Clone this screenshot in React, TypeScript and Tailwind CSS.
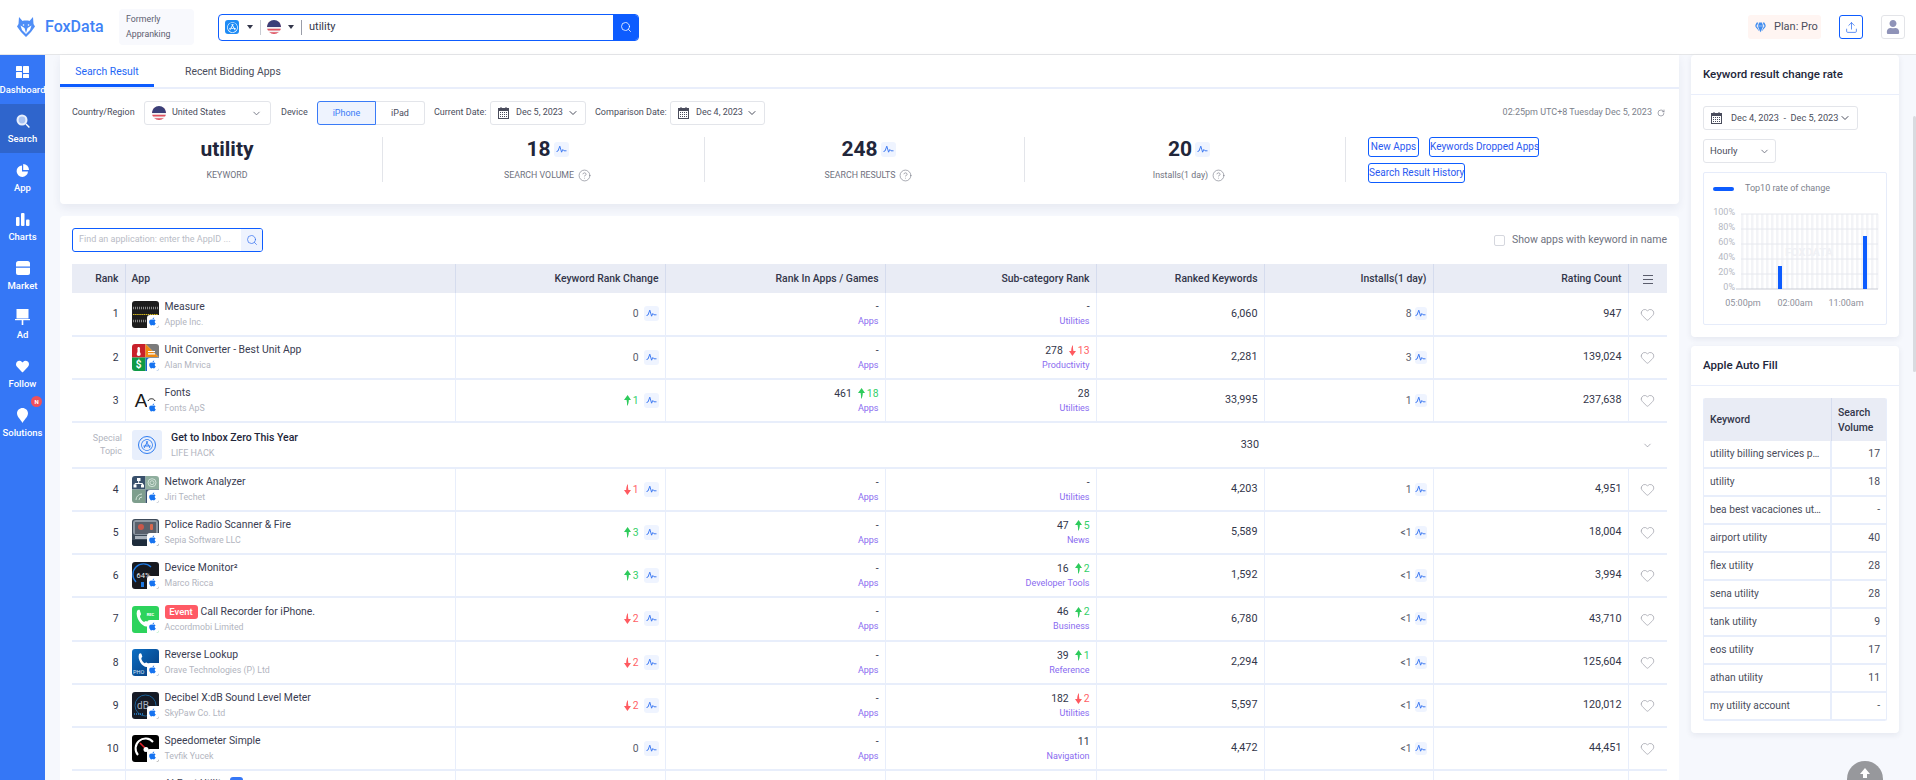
import * as React from "react";
import { ChevronDown, CircleHelp, Heart, RotateCw, Search, Upload } from "lucide-react";
import { FaApple, FaAppStore, FaGem, FaHeart, FaUser } from "react-icons/fa";

type Delta = { dir: "up" | "down"; n: number };

interface Row {
  rank: number;
  name: string;
  dev: string;
  icon: string;
  event?: boolean;
  change: number | Delta;
  apps?: { val: number; delta: Delta };
  sub: { val?: number; delta?: Delta; label: string };
  ranked: string;
  installs: string;
  rating: string;
}

const rows: Row[] = [
  { rank: 1, name: "Measure", dev: "Apple Inc.", icon: "measure", change: 0, sub: { label: "Utilities" }, ranked: "6,060", installs: "8", rating: "947" },
  { rank: 2, name: "Unit Converter - Best Unit App", dev: "Alan Mrvica", icon: "unit", change: 0, sub: { val: 278, delta: { dir: "down", n: 13 }, label: "Productivity" }, ranked: "2,281", installs: "3", rating: "139,024" },
  { rank: 3, name: "Fonts", dev: "Fonts ApS", icon: "fonts", change: { dir: "up", n: 1 }, apps: { val: 461, delta: { dir: "up", n: 18 } }, sub: { val: 28, label: "Utilities" }, ranked: "33,995", installs: "1", rating: "237,638" },
  { rank: 4, name: "Network Analyzer", dev: "Jiri Techet", icon: "network", change: { dir: "down", n: 1 }, sub: { label: "Utilities" }, ranked: "4,203", installs: "1", rating: "4,951" },
  { rank: 5, name: "Police Radio Scanner & Fire", dev: "Sepia Software LLC", icon: "police", change: { dir: "up", n: 3 }, sub: { val: 47, delta: { dir: "up", n: 5 }, label: "News" }, ranked: "5,589", installs: "<1", rating: "18,004" },
  { rank: 6, name: "Device Monitor²", dev: "Marco Ricca", icon: "device", change: { dir: "up", n: 3 }, sub: { val: 16, delta: { dir: "up", n: 2 }, label: "Developer Tools" }, ranked: "1,592", installs: "<1", rating: "3,994" },
  { rank: 7, name: "Call Recorder for iPhone.", dev: "Accordmobi Limited", icon: "call", event: true, change: { dir: "down", n: 2 }, sub: { val: 46, delta: { dir: "up", n: 2 }, label: "Business" }, ranked: "6,780", installs: "<1", rating: "43,710" },
  { rank: 8, name: "Reverse Lookup", dev: "Orave Technologies (P) Ltd", icon: "reverse", change: { dir: "down", n: 2 }, sub: { val: 39, delta: { dir: "up", n: 1 }, label: "Reference" }, ranked: "2,294", installs: "<1", rating: "125,604" },
  { rank: 9, name: "Decibel X:dB Sound Level Meter", dev: "SkyPaw Co. Ltd", icon: "decibel", change: { dir: "down", n: 2 }, sub: { val: 182, delta: { dir: "down", n: 2 }, label: "Utilities" }, ranked: "5,597", installs: "<1", rating: "120,012" },
  { rank: 10, name: "Speedometer Simple", dev: "Tevfik Yucek", icon: "speed", change: 0, sub: { val: 11, label: "Navigation" }, ranked: "4,472", installs: "<1", rating: "44,451" },
];

const autoFill: [string, string][] = [
  ["utility billing services provider", "17"],
  ["utility", "18"],
  ["bea best vacaciones utility", "-"],
  ["airport utility", "40"],
  ["flex utility", "28"],
  ["sena utility", "28"],
  ["tank utility", "9"],
  ["eos utility", "17"],
  ["athan utility", "11"],
  ["my utility account", "-"],
];

function Flag({ size = 14 }: { size?: number }) {
  const id = React.useId();
  return (
    <svg width={size} height={size} viewBox="0 0 16 16" className="shrink-0">
      <clipPath id={id}>
        <circle cx="8" cy="8" r="8" />
      </clipPath>
      <g clipPath={`url(#${id})`}>
        <rect width="16" height="16" fill="#f3f3f5" />
        <rect y="2" width="16" height="2" fill="#e0525f" />
        <rect y="6" width="16" height="2" fill="#e0525f" />
        <rect y="10" width="16" height="2" fill="#e0525f" />
        <rect y="14" width="16" height="2" fill="#e0525f" />
        <rect width="16" height="8" fill="#3b3f78" />
      </g>
    </svg>
  );
}

function CalendarIcon() {
  return (
    <svg width="11" height="12" viewBox="0 0 11 12" className="shrink-0">
      <rect x="0.5" y="1.5" width="10" height="10" fill="none" stroke="#4a4d5c" />
      <rect x="0.5" y="1.5" width="10" height="2.5" fill="#4a4d5c" />
      <rect x="2.5" y="0" width="1" height="2.5" fill="#4a4d5c" />
      <rect x="7.5" y="0" width="1" height="2.5" fill="#4a4d5c" />
      <path d="M2 5.5h7M2 7.5h7M2 9.5h7" stroke="#4a4d5c" strokeDasharray="1 1" />
    </svg>
  );
}

function Trend({ w = 15, h = 15 }: { w?: number; h?: number }) {
  return (
    <span className="inline-flex items-center justify-center rounded-[3px] bg-[#eff4ff] shrink-0" style={{ width: w, height: h }}>
      <svg width="11" height="9" viewBox="0 0 11 9" fill="none">
        <path d="M0.5 6.5 2 6 3.8 1.2 5.6 7.2 6.8 4.5 8 5.8h2.5" stroke="#2f6ff0" strokeWidth="0.9" />
      </svg>
    </span>
  );
}

function Arrow({ dir }: { dir: "up" | "down" }) {
  return (
    <svg width="7" height="11" viewBox="0 0 7 11" className="inline-block shrink-0">
      {dir === "up" ? (
        <path d="M3.6 0 7 5H4.8C4.8 7 4.4 9.5 3 11 3.2 9 3 7 2.6 5H0Z" fill="#2ecb5c" />
      ) : (
        <path d="M3.4 11 0 6H2.2C2.2 4 2.6 1.5 4 0 3.8 2 4 4 4.4 6H7Z" fill="#ff5a60" />
      )}
    </svg>
  );
}

function DeltaView({ delta }: { delta: Delta }) {
  return (
    <span className={`inline-flex items-center gap-[2px] ${delta.dir === "up" ? "text-[#35cf6a]" : "text-[#ff5f66]"}`}>
      <Arrow dir={delta.dir} />
      {delta.n}
    </span>
  );
}

function AppIcon({ kind }: { kind: string }) {
  let art: React.ReactNode = null;
  if (kind === "measure") {
    art = (
      <>
        <rect width="27" height="27" fill="#1c1c1c" />
        <path d="M1 7h25" stroke="#8a8a8a" strokeWidth="2.5" strokeDasharray="1 1" />
        <path d="M1 13.5h25" stroke="#d6b91f" strokeWidth="1" strokeDasharray="1.5 0.6" />
        <path d="M1 20h16" stroke="#8a8a8a" strokeWidth="2.5" strokeDasharray="1 1" />
      </>
    );
  } else if (kind === "unit") {
    art = (
      <>
        <rect width="13.5" height="13.5" fill="#c8202a" />
        <path d="M13.5 0H27V13.5Z" fill="#7b7b7b" />
        <path d="M13.5 0 27 13.5H13.5Z" fill="#ef8a10" />
        <rect y="13.5" width="13.5" height="13.5" fill="#0f9a45" />
        <rect x="13.5" y="13.5" width="13.5" height="13.5" fill="#1766c8" />
        <rect x="5.5" y="3" width="2.4" height="7" rx="1.2" fill="#fff" />
        <circle cx="6.7" cy="10" r="2" fill="#fff" />
        <path d="M16 7.5h7M16 9.8h7" stroke="#fff" strokeWidth="1.2" />
        <text x="6.7" y="24" fontSize="10" fontWeight="700" fill="#fff" textAnchor="middle" fontFamily="Roboto, sans-serif">$</text>
      </>
    );
  } else if (kind === "fonts") {
    art = (
      <>
        <rect width="27" height="27" fill="#fff" />
        <text x="9" y="20" fontSize="19" fill="#1a1a1a" textAnchor="middle" fontFamily="'Liberation Sans', sans-serif">A</text>
        <path d="M16 14c1-3 6-3 7 0" fill="none" stroke="#1a1a1a" strokeWidth="1" />
      </>
    );
  } else if (kind === "network") {
    art = (
      <>
        <rect width="13.5" height="13.5" fill="#39506b" />
        <rect x="13.5" width="13.5" height="13.5" fill="#8fae9e" />
        <rect y="13.5" width="13.5" height="13.5" fill="#7e9e8d" />
        <rect x="13.5" y="13.5" width="13.5" height="13.5" fill="#39506b" />
        <path d="M6.7 3v4M3 10V7.5h7.5V10" fill="none" stroke="#fff" />
        <rect x="5" y="2" width="3.5" height="3" fill="#fff" />
        <rect x="1.5" y="8.5" width="3" height="3" fill="#fff" />
        <rect x="9" y="8.5" width="3" height="3" fill="#fff" />
        <circle cx="20" cy="6.7" r="4" fill="none" stroke="#cfe0d6" />
        <circle cx="20" cy="6.7" r="2" fill="none" stroke="#cfe0d6" />
        <path d="M4 24a6 6 0 0 1 6-6M7 24a3 3 0 0 1 3-3" fill="none" stroke="#cfe0d6" />
      </>
    );
  } else if (kind === "police") {
    art = (
      <>
        <rect width="27" height="27" fill="#3d4a58" />
        <rect x="1" y="1" width="25" height="15" rx="3" fill="#8e98a3" />
        <rect x="3" y="3" width="21" height="12" fill="#59606b" />
        <circle cx="9" cy="8" r="3" fill="#c9574a" />
        <rect x="18" y="5" width="3" height="6" rx="1" fill="#d8694f" />
        <rect x="3" y="17" width="21" height="3" fill="#aab2bb" />
        <rect y="21" width="27" height="6" fill="#1e2c3b" />
      </>
    );
  } else if (kind === "device") {
    art = (
      <>
        <rect width="27" height="27" fill="#181a20" />
        <path d="M4 20A10.5 10.5 0 0 1 19 5" fill="none" stroke="#1e78e0" strokeWidth="1.4" />
        <text x="11.5" y="16" fontSize="7.5" fill="#f0f0f0" textAnchor="middle" fontFamily="Roboto, sans-serif">64%</text>
        <rect x="9" y="20" width="3" height="5" fill="#1e78e0" />
      </>
    );
  } else if (kind === "call") {
    art = (
      <>
        <rect width="27" height="27" fill="#2dd35c" />
        <path d="M5 5c2-2 3-1 3 0l1 3c0 1-1 1.600-1 2 0 2 2 5 4 6 .6 0 1-1 2-1l3 1.500c1 1 0 3-2 4C10 21 3 12 5 5Z" fill="#fff" />
        <text x="18.500" y="10" fontSize="4" fontWeight="700" fill="#fff" textAnchor="middle" fontFamily="Roboto, sans-serif">REC</text>
      </>
    );
  } else if (kind === "reverse") {
    art = (
      <>
        <defs>
          <linearGradient id="revGrad" x1="0" y1="0" x2="1" y2="1">
            <stop offset="0" stopColor="#0b6fc4" />
            <stop offset="1" stopColor="#083a7a" />
          </linearGradient>
        </defs>
        <rect width="27" height="27" fill="url(#revGrad)" />
        <path d="M7 5c1-1 2-1 2.500 0l.8 2.500c0 1-1 1-1 1.700 0 2 2 4.300 3.500 5 .6 0 1-.8 1.700-.7l2.500 1.500c.8.8 0 2.500-1.500 3C11 19 5 11 7 5Z" fill="#fff" />
        <text x="1" y="25" fontSize="5.500" fill="#dbe8f5" fontFamily="Roboto, sans-serif">PHO</text>
      </>
    );
  } else if (kind === "decibel") {
    art = (
      <>
        <rect width="27" height="27" fill="#161b26" />
        <circle cx="13.500" cy="13.500" r="10.500" fill="none" stroke="#1a5f94" strokeWidth="1" />
        <text x="11" y="17" fontSize="10" fill="#a9b4c0" textAnchor="middle" fontFamily="Roboto, sans-serif">dB</text>
        <path d="M2 22h9" stroke="#2a86d6" strokeWidth="1.500" strokeDasharray="1 1" />
      </>
    );
  } else if (kind === "speed") {
    art = (
      <>
        <rect width="27" height="27" fill="#000" />
        <path d="M6 20A9.500 9.500 0 0 1 21 7" fill="none" stroke="#fff" strokeWidth="2" />
        <path d="M8 8l6 6" stroke="#e6242b" strokeWidth="1.600" />
        <circle cx="14" cy="14.500" r="2.500" fill="#fff" />
      </>
    );
  }
  return (
    <div className="relative w-[27px] h-[27px] shrink-0 rounded-[3px] overflow-hidden">
      <svg width="27" height="27" viewBox="0 0 27 27" className="block">{art}</svg>
      <span className="absolute right-0 bottom-0 w-[12px] h-[13px] bg-white rounded-tl-[3px] flex items-center justify-center">
        <FaApple className="text-[#1673f0] text-[9px]" />
      </span>
    </div>
  );
}

const side: { label: string; icon: React.ReactNode; active?: boolean; badge?: boolean }[] = [
  {
    label: "Dashboard",
    icon: (
      <svg width="13" height="12" viewBox="0 0 13 12" fill="#fff">
        <rect width="6" height="5" rx="0.600" />
        <rect x="7" width="6" height="7" rx="0.600" />
        <rect y="6" width="6" height="6" rx="0.600" />
        <rect x="7" y="8" width="6" height="4" rx="0.600" />
      </svg>
    ),
  },
  {
    label: "Search",
    active: true,
    icon: (
      <svg width="14" height="14" viewBox="0 0 14 14">
        <circle cx="6" cy="6" r="5.500" fill="#e8effc" />
        <circle cx="6" cy="6" r="3.400" fill="#a9c3f2" />
        <path d="M10 10l3.400 3.400" stroke="#fff" strokeWidth="1.400" />
      </svg>
    ),
  },
  {
    label: "App",
    icon: (
      <svg width="13" height="13" viewBox="0 0 13 13" fill="#fff">
        <path d="M6 1.500A5.700 5.700 0 1 0 12 7.500H6Z" />
        <path d="M7.200 0v6h5.800A6 6 0 0 0 7.200 0Z" />
      </svg>
    ),
  },
  {
    label: "Charts",
    icon: (
      <svg width="14" height="13" viewBox="0 0 14 13" fill="#fff">
        <rect y="4" width="3.500" height="9" rx="1" />
        <rect x="5" width="3.500" height="13" rx="1" />
        <rect x="10" y="6.500" width="3.500" height="6.500" rx="1" />
      </svg>
    ),
  },
  {
    label: "Market",
    icon: (
      <svg width="14" height="14" viewBox="0 0 14 14" fill="#fff">
        <path d="M2.500 0h9A2.500 2.500 0 0 1 14 2.500V5.500H0V2.500A2.500 2.500 0 0 1 2.500 0Z" />
        <path d="M0 6.800h14V12a2 2 0 0 1-2 2H2a2 2 0 0 1-2-2Z" />
      </svg>
    ),
  },
  {
    label: "Ad",
    icon: (
      <svg width="15" height="16" viewBox="0 0 15 16" fill="#fff">
        <rect x="1.500" width="12" height="9.500" />
        <rect y="10" width="15" height="1.200" />
        <rect x="6.700" y="11" width="1.600" height="5" />
      </svg>
    ),
  },
  { label: "Follow", icon: <FaHeart className="text-white text-[13px]" /> },
  {
    label: "Solutions",
    badge: true,
    icon: (
      <svg width="11" height="15" viewBox="0 0 11 15" fill="#fff">
        <path d="M5.500 0C8.500 0 11 2.300 11 5.300 11 9 7 12 5.500 15 4 12 0 9 0 5.300 0 2.300 2.500 0 5.500 0Z" />
      </svg>
    ),
  },
];

function Sidebar() {
  return (
    <nav className="w-[45px] shrink-0 bg-[#3577f6] flex flex-col">
      {side.map((s) => (
        <div
          key={s.label}
          className={`relative h-[49px] flex flex-col items-center text-white text-[9.5px] font-medium ${s.active ? "bg-[#2f65cc]" : ""}`}
        >
          <div className="h-[16px] mt-[9px] flex items-center justify-center">{s.icon}</div>
          <span className="mt-[3px] leading-[13px] whitespace-nowrap">{s.label}</span>
          {s.badge && (
            <span className="absolute left-[31px] top-[-2px] w-[11px] h-[11px] rounded-full bg-[#f0505a] text-white text-[6px] font-bold leading-[11px] text-center">N</span>
          )}
        </div>
      ))}
    </nav>
  );
}

function Header() {
  return (
    <header className="h-[55px] shrink-0 bg-white border-b border-[#e5e6e8] flex items-center pl-[17px] pr-[11px]">
      <svg width="18" height="20" viewBox="0 0 18 20" fill="none" className="shrink-0">
        <path d="M2 0 5.500 4C7 3.400 11 3.400 12.500 4L16 0l.5 7L18 9.500 14 15l-5 5-5-5L0 9.500 1.500 7Z" fill="#4f8ef7" />
        <path d="M3.500 8.500 7.500 11 9 16l1.500-5 4-2.500L13 13l-4 4-4-4Z" fill="#fff" />
        <circle cx="6.500" cy="8" r="0.800" fill="#fff" />
        <circle cx="11.500" cy="8" r="0.800" fill="#fff" />
      </svg>
      <span className="ml-[10px] w-[74px] shrink-0 text-[16px] font-medium text-[#3f83f6]">FoxData</span>
      <div className="w-[75px] h-[36px] shrink-0 rounded-[4px] bg-[#f8f9fd] pl-[7px] text-[8.800px] text-[#5d6070] leading-[15px] pt-[3px]">
        Formerly<br />Appranking
      </div>
      <div className="ml-[24px] w-[421px] h-[27px] border border-[#0d5cff] rounded-[4px] flex items-center overflow-hidden">
        <span className="ml-[6px] w-[14px] h-[14px] rounded-[3px] bg-[#1e8bf5] flex items-center justify-center">
          <FaAppStore className="text-white text-[11px]" />
        </span>
        <span className="ml-[8px] border-x-[3px] border-x-transparent border-t-[4px] border-t-[#33364a]" />
        <span className="ml-[7px] h-[15px] w-px bg-[#c9ccd3]" />
        <span className="ml-[6px]"><Flag /></span>
        <span className="ml-[7px] border-x-[3px] border-x-transparent border-t-[4px] border-t-[#33364a]" />
        <span className="ml-[7px] h-[15px] w-px bg-[#9a9da8]" />
        <span className="ml-[7px] text-[11px] text-[#33364a] flex-1">utility</span>
        <span className="w-[25px] h-full bg-[#0d5cff] flex items-center justify-center">
          <Search className="w-[12px] h-[12px] text-white" strokeWidth={1.6} />
        </span>
      </div>
      <div className="ml-auto w-[73px] h-[24px] rounded-[3px] bg-[#fff5f2] flex items-center pl-[7px] text-[11px] text-[#4a4d5c]">
        <FaGem className="text-[#3f8cf0] text-[11px]" />
        <span className="ml-[8px]">Plan: Pro</span>
      </div>
      <div className="ml-[18px] w-[24px] h-[24px] rounded-[3px] border border-[#0d5cff] flex items-center justify-center">
        <Upload className="w-[13px] h-[13px] text-[#2f6ff0]" strokeWidth={1.4} />
      </div>
      <div className="ml-[18px] w-[24px] h-[24px] rounded-[3px] border border-[#e3e4e8] flex items-center justify-center">
        <FaUser className="text-[#8f93b8] text-[14px]" />
      </div>
    </header>
  );
}

function Select({ className, children }: { className: string; children: React.ReactNode }) {
  return (
    <div className={`h-[24px] border border-[#e3e5ea] rounded-[3px] flex items-center text-[9px] text-[#4a4d5c] shrink-0 ${className}`}>
      {children}
    </div>
  );
}

function Stat({ value, label, trend, help, w }: { value: string; label: string; trend?: boolean; help?: boolean; w: string }) {
  return (
    <div className={`h-[45px] shrink-0 border-r border-[#e3e5ea] flex flex-col items-center ${w}`}>
      <div className="h-[24px] flex items-center gap-[3px] text-[21px] font-bold text-[#22263a] leading-none">
        {value}
        {trend && <Trend />}
      </div>
      <div className="mt-[8px] flex items-center gap-[4px] text-[8.800px] text-[#6f7280] leading-[13px]">
        {label}
        {help && <CircleHelp className="w-[13px] h-[13px] text-[#6f7280]" strokeWidth={1.1} />}
      </div>
    </div>
  );
}

function TopPanel() {
  return (
    <section className="h-[149px] bg-white rounded-b-[4px] shadow-[0_4px_10px_rgba(30,40,80,0.07)]">
      <div className="h-[34px] border-b-2 border-[#e9eefb] flex items-end text-[10.400px]">
        <div className="w-[94px] h-[34px] border-b-[3px] border-[#0d5cff] text-[#1e66f5] text-center leading-[38px]">Search Result</div>
        <div className="ml-[31px] h-[34px] text-[#4a4d5c] leading-[38px]">Recent Bidding Apps</div>
      </div>
      <div className="mt-[12px] pl-[12px] pr-[14px] flex items-center text-[9px] text-[#4a4d5c]">
        <span className="w-[72px] shrink-0">Country/Region</span>
        <Select className="w-[127px] pl-[7px] pr-[8px]">
          <Flag />
          <span className="ml-[6px] flex-1">United States</span>
          <ChevronDown className="w-[11px] h-[11px] text-[#6f7280]" />
        </Select>
        <span className="ml-[10px] w-[36px] shrink-0">Device</span>
        <div className="h-[24px] w-[108px] flex shrink-0 text-center leading-[22px]">
          <div className="w-[59px] border border-[#3a7bf7] rounded-l-[3px] bg-[#eef3fe] text-[#3a7bf7]">iPhone</div>
          <div className="w-[49px] border border-l-0 border-[#e3e5ea] rounded-r-[3px]">iPad</div>
        </div>
        <span className="ml-[9px] w-[56px] shrink-0 whitespace-nowrap">Current Date:</span>
        <Select className="w-[96px] pl-[7px] pr-[6px]">
          <CalendarIcon />
          <span className="ml-[7px] flex-1 whitespace-nowrap">Dec 5, 2023</span>
          <ChevronDown className="w-[12px] h-[12px]" />
        </Select>
        <span className="ml-[9px] w-[75px] shrink-0 whitespace-nowrap">Comparison Date:</span>
        <Select className="w-[95px] pl-[7px] pr-[6px]">
          <CalendarIcon />
          <span className="ml-[7px] flex-1 whitespace-nowrap">Dec 4, 2023</span>
          <ChevronDown className="w-[12px] h-[12px]" />
        </Select>
        <span className="ml-auto flex items-center gap-[5px] text-[9px] text-[#7c7f8c] whitespace-nowrap">
          02:25pm UTC+8 Tuesday Dec 5, 2023
          <RotateCw className="w-[8px] h-[8px]" />
        </span>
      </div>
      <div className="mt-[12px] pl-[12px] flex">
        <Stat w="w-[311px]" value="utility" label="KEYWORD" />
        <Stat w="w-[322px] pl-[8px]" value="18" label="SEARCH VOLUME" trend help />
        <Stat w="w-[320px] pl-[8px]" value="248" label="SEARCH RESULTS" trend help />
        <Stat w="w-[321px] pl-[8px]" value="20" label="Installs(1 day)" trend help />
        <div className="ml-[22px] w-[175px] flex flex-wrap gap-x-[10px] gap-y-[6px] text-[10px] text-[#2b59f0]">
          <span className="h-[20px] w-[51px] border border-[#0d5cff] rounded-[3px] leading-[17px] text-center whitespace-nowrap">New Apps</span>
          <span className="h-[20px] w-[110px] border border-[#0d5cff] rounded-[3px] leading-[17px] text-center whitespace-nowrap">Keywords Dropped Apps</span>
          <span className="h-[20px] w-[97px] border border-[#0d5cff] rounded-[3px] leading-[17px] text-center whitespace-nowrap">Search Result History</span>
        </div>
      </div>
    </section>
  );
}

const cell = "border-b-2 border-r border-[#e8eefb] text-right pr-[6px] align-middle";
const headCell = "border-r border-[#d5dcee] text-right pr-[6px] font-medium text-[#33364a] text-[10.400px] align-middle";

function RankCell({ val, delta, label }: { val?: number; delta?: Delta; label: string }) {
  return (
    <td className={cell}>
      <div className="flex flex-col items-end leading-[14px]">
        <div className="flex items-center gap-[6px] h-[14px] text-[10.400px] text-[#33364a]">
          {val === undefined ? "-" : val}
          {delta && <DeltaView delta={delta} />}
        </div>
        <div className="text-[9px] text-[#8a6cf0]">{label}</div>
      </div>
    </td>
  );
}

function AppRow({ r }: { r: Row }) {
  return (
    <tr className={r.event ? "h-[44px]" : "h-[43px]"}>
      <td className={`${cell} text-[10.400px] text-[#33364a]`}>{r.rank}</td>
      <td className={`${cell} !text-left pl-[6px]`}>
        <div className="flex items-center gap-[6px]">
          <AppIcon kind={r.icon} />
          <div className="min-w-0 leading-[14px]">
            <div className="flex items-center text-[10.400px] text-[#3a3d52] whitespace-nowrap">
              {r.event && <span className="h-[14px] w-[33px] mr-[3px] rounded-[3px] bg-[#ff5a65] text-white text-[9.500px] font-medium leading-[14px] text-center">Event</span>}
              {r.name}
            </div>
            <div className="mt-[1px] text-[8.800px] text-[#b2b5c0] whitespace-nowrap">{r.dev}</div>
          </div>
        </div>
      </td>
      <td className={cell}>
        <div className="flex items-center justify-end gap-[5px] text-[10.400px] text-[#5a5d6c]">
          {typeof r.change === "number" ? r.change : <DeltaView delta={r.change} />}
          <Trend />
        </div>
      </td>
      {r.apps ? <RankCell val={r.apps.val} delta={r.apps.delta} label="Apps" /> : <RankCell label="Apps" />}
      <RankCell val={r.sub.val} delta={r.sub.delta} label={r.sub.label} />
      <td className={`${cell} text-[10.800px] text-[#33364a]`}>{r.ranked}</td>
      <td className={cell}>
        <div className="flex items-center justify-end gap-[3px] text-[10.400px] text-[#5a5d6c]">
          {r.installs}
          <Trend w={12} h={13} />
        </div>
      </td>
      <td className={`${cell} text-[10.800px] text-[#33364a]`}>{r.rating}</td>
      <td className="border-b-2 border-[#e8eefb] align-middle">
        <Heart className="block mx-auto w-[15px] h-[15px] text-[#8e919c]" strokeWidth={1} />
      </td>
    </tr>
  );
}

function ResultTable() {
  return (
    <table className="w-[1595px] table-fixed border-collapse">
      <colgroup>
        <col className="w-[53px]" />
        <col className="w-[330px]" />
        <col className="w-[210px]" />
        <col className="w-[220px]" />
        <col className="w-[211px]" />
        <col className="w-[168px]" />
        <col className="w-[169px]" />
        <col className="w-[195px]" />
        <col className="w-[39px]" />
      </colgroup>
      <thead>
        <tr className="h-[29px] bg-[#e9ecf5]">
          <th className={headCell}>Rank</th>
          <th className={`${headCell} !text-left pl-[6px]`}>App</th>
          <th className={headCell}>Keyword Rank Change</th>
          <th className={headCell}>Rank In Apps / Games</th>
          <th className={headCell}>Sub-category Rank</th>
          <th className={headCell}>Ranked Keywords</th>
          <th className={headCell}>Installs(1 day)</th>
          <th className={headCell}>Rating Count</th>
          <th className="text-center align-middle">
            <span className="inline-flex flex-col gap-[2.500px] align-middle">
              <span className="w-[10px] h-[1.500px] bg-[#5a5d6c]" />
              <span className="w-[10px] h-[1.500px] bg-[#5a5d6c]" />
              <span className="w-[10px] h-[1.500px] bg-[#5a5d6c]" />
            </span>
          </th>
        </tr>
      </thead>
      <tbody>
        {rows.slice(0, 3).map((r) => <AppRow key={r.rank} r={r} />)}
        <tr className="h-[46px]">
          <td className="border-b-2 border-[#e8eefb] text-right pr-[3px] text-[9px] leading-[13px] text-[#b2b5c0]">Special<br />Topic</td>
          <td colSpan={4} className="border-b-2 border-[#e8eefb] pl-[7px]">
            <div className="flex items-center">
              <span className="w-[30px] h-[30px] rounded-[3px] bg-[#e8effc] flex items-center justify-center">
                <span className="w-[18px] h-[18px] rounded-full border-[1.500px] border-[#2f7cf0] flex items-center justify-center">
                  <FaAppStore className="text-[#2f7cf0] text-[12px]" />
                </span>
              </span>
              <div className="ml-[9px] leading-[14px]">
                <div className="text-[10.500px] font-medium text-[#22263a]">Get to Inbox Zero This Year</div>
                <div className="mt-[1px] text-[9px] text-[#b2b5c0]">LIFE HACK</div>
              </div>
            </div>
          </td>
          <td className="border-b-2 border-[#e8eefb] text-right pr-[5px] text-[10.800px] text-[#33364a]">330</td>
          <td colSpan={2} className="border-b-2 border-[#e8eefb]" />
          <td className="border-b-2 border-[#e8eefb] text-center">
            <ChevronDown className="inline-block w-[11px] h-[11px] text-[#6f7280]" strokeWidth={1.2} />
          </td>
        </tr>
        {rows.slice(3).map((r) => <AppRow key={r.rank} r={r} />)}
        <tr className="h-[43px]">
          <td className={cell} />
          <td className={`${cell} !text-left pl-[39px] align-top pt-[6px]`}>
            <div className="flex items-center text-[10.400px] text-[#3a3d52] leading-[14px]">
              AI Font Utility
              <span className="ml-[4px] w-[13px] h-[14px] rounded-[3px] bg-[#3577f6]" />
            </div>
          </td>
          <td className={cell} />
          <td className={cell} />
          <td className={cell} />
          <td className={cell} />
          <td className={cell} />
          <td className={cell} />
          <td className="border-b-2 border-[#e8eefb]" />
        </tr>
      </tbody>
    </table>
  );
}

function ResultPanel() {
  return (
    <section className="mt-[12px] bg-white rounded-t-[4px] px-[12px] pt-[12px] pb-[20px]">
      <div className="h-[24px] flex items-center justify-between">
        <div className="w-[191px] h-[24px] border border-[#0d5cff] rounded-[3px] flex items-center overflow-hidden">
          <span className="flex-1 pl-[6px] text-[9px] text-[#b9bcc6] whitespace-nowrap">Find an application: enter the AppID ...</span>
          <span className="w-[21px] h-full bg-[#eef3fe] flex items-center justify-center">
            <Search className="w-[12px] h-[12px] text-[#2f6ff0]" strokeWidth={1.4} />
          </span>
        </div>
        <label className="flex items-center text-[10.500px] text-[#6f7280]">
          <span className="w-[11px] h-[11px] border border-[#d5d7de] rounded-[2px] mr-[7px]" />
          Show apps with keyword in name
        </label>
      </div>
      <div className="mt-[12px]">
        <ResultTable />
      </div>
    </section>
  );
}

function ChangeChart() {
  const stripes = Array.from({ length: 28 }, (_, i) => i);
  return (
    <svg width="182" height="120" viewBox="0 0 182 120" className="block">
      {stripes.map((i) => (
        <rect key={i} x={37 + i * 5} y="10" width="2.500" height="75" fill="#f3f4f7" />
      ))}
      <text x="105" y="52" fontSize="11" fontWeight="700" fill="#f0f1f5" textAnchor="middle" fontFamily="Roboto, sans-serif">FOXDATA</text>
      {[10, 25, 40, 55, 70].map((y) => (
        <path key={y} d={`M37 ${y}H174`} stroke="#e6e8ee" strokeWidth="1" />
      ))}
      <path d="M32 85H174" stroke="#c9ccd5" strokeWidth="1" />
      {["100%", "80%", "60%", "40%", "20%", "0%"].map((t, i) => (
        <text key={t} x="31" y={11 + i * 15} fontSize="9" fill="#b5b8c2" textAnchor="end" fontFamily="Roboto, sans-serif">{t}</text>
      ))}
      <rect x="74" y="62" width="4" height="23" fill="#0d5cff" />
      <rect x="159" y="32" width="4" height="53" fill="#0d5cff" />
      {[["05:00pm", 39], ["02:00am", 91], ["11:00am", 142]].map(([t, x]) => (
        <text key={t} x={x} y="102" fontSize="9" fill="#8e919c" textAnchor="middle" fontFamily="Roboto, sans-serif">{t}</text>
      ))}
    </svg>
  );
}

function SideCard({ title, titleH, children, className }: { title: string; titleH: string; children: React.ReactNode; className?: string }) {
  return (
    <div className={`bg-white rounded-[4px] shadow-[0_2px_6px_rgba(30,40,80,0.08)] ${className ?? ""}`}>
      <div className={`${titleH} border-b border-[#e9eefb] pl-[12px] flex items-center text-[11.500px] font-medium text-[#22263a]`}>{title}</div>
      {children}
    </div>
  );
}

function RightColumn() {
  return (
    <aside className="ml-[12px] w-[208px] shrink-0">
      <SideCard title="Keyword result change rate" titleH="h-[40px]" className="h-[282px]">
        <div className="pl-[12px] pt-[11px]">
          <Select className="w-[155px] pl-[7px] pr-[6px]">
            <CalendarIcon />
            <span className="ml-[9px] flex-1 whitespace-nowrap text-[9.200px]">Dec 4, 2023&nbsp; - &nbsp;Dec 5, 2023</span>
            <ChevronDown className="w-[12px] h-[12px]" />
          </Select>
          <Select className="mt-[9px] w-[73px] pl-[6px] pr-[5px]">
            <span className="flex-1 text-[9.500px]">Hourly</span>
            <ChevronDown className="w-[11px] h-[11px] text-[#6f7280]" />
          </Select>
          <div className="mt-[9px] w-[184px] h-[153px] border border-[#e6ecfa] rounded-[2px]">
            <div className="h-[31px] pl-[9px] flex items-center text-[9px] text-[#7c7f8c]">
              <span className="w-[21px] h-[4px] rounded-full bg-[#0d5cff] mr-[11px]" />
              Top10 rate of change
            </div>
            <ChangeChart />
          </div>
        </div>
      </SideCard>
      <SideCard title="Apple Auto Fill" titleH="h-[40px]" className="mt-[9px] h-[387px]">
        <div className="mx-[12px] mt-[12px] border-x border-[#e8eefb] rounded-[2px] overflow-hidden text-[10.200px]">
          <div className="h-[43px] bg-[#e9ecf5] flex text-[#33364a] font-medium leading-[15px] text-[10.400px]">
            <div className="w-[128px] pl-[6px] flex items-center border-r border-[#d5dcee]">Keyword</div>
            <div className="flex-1 pl-[6px] flex items-center">Search<br />Volume</div>
          </div>
          {autoFill.map(([k, v]) => (
            <div key={k} className="h-[28px] flex items-center border-b-2 border-[#e8eefb] text-[#4a4d5c]">
              <div className="w-[128px] h-full pl-[6px] pr-[8px] border-r-2 border-[#e8eefb] truncate leading-[26px]">{k}</div>
              <div className="flex-1 pr-[6px] text-right text-[10.400px]">{v}</div>
            </div>
          ))}
        </div>
      </SideCard>
    </aside>
  );
}

export default function App() {
  return (
    <div className="relative w-[1916px] h-[780px] overflow-hidden bg-white flex flex-col font-['Roboto',sans-serif]">
      <Header />
      <div className="flex-1 flex min-h-0">
        <Sidebar />
        <main className="flex-1 flex bg-[#f6f8fd] pl-[15px] min-h-0">
          <div className="w-[1619px] shrink-0">
            <TopPanel />
            <ResultPanel />
          </div>
          <RightColumn />
        </main>
      </div>
      <span className="absolute right-0 top-[116px] w-[3px] h-[256px] bg-[#d9dbe0] rounded-full" />
      <span className="absolute left-[1847px] top-[761px] w-[36px] h-[36px] rounded-full bg-[#97989c] flex justify-center pt-[6px]">
        <svg width="12" height="12" viewBox="0 0 12 12" fill="#fff">
          <path d="M6 1 11 7H8V11H4V7H1Z" />
        </svg>
      </span>
    </div>
  );
}
